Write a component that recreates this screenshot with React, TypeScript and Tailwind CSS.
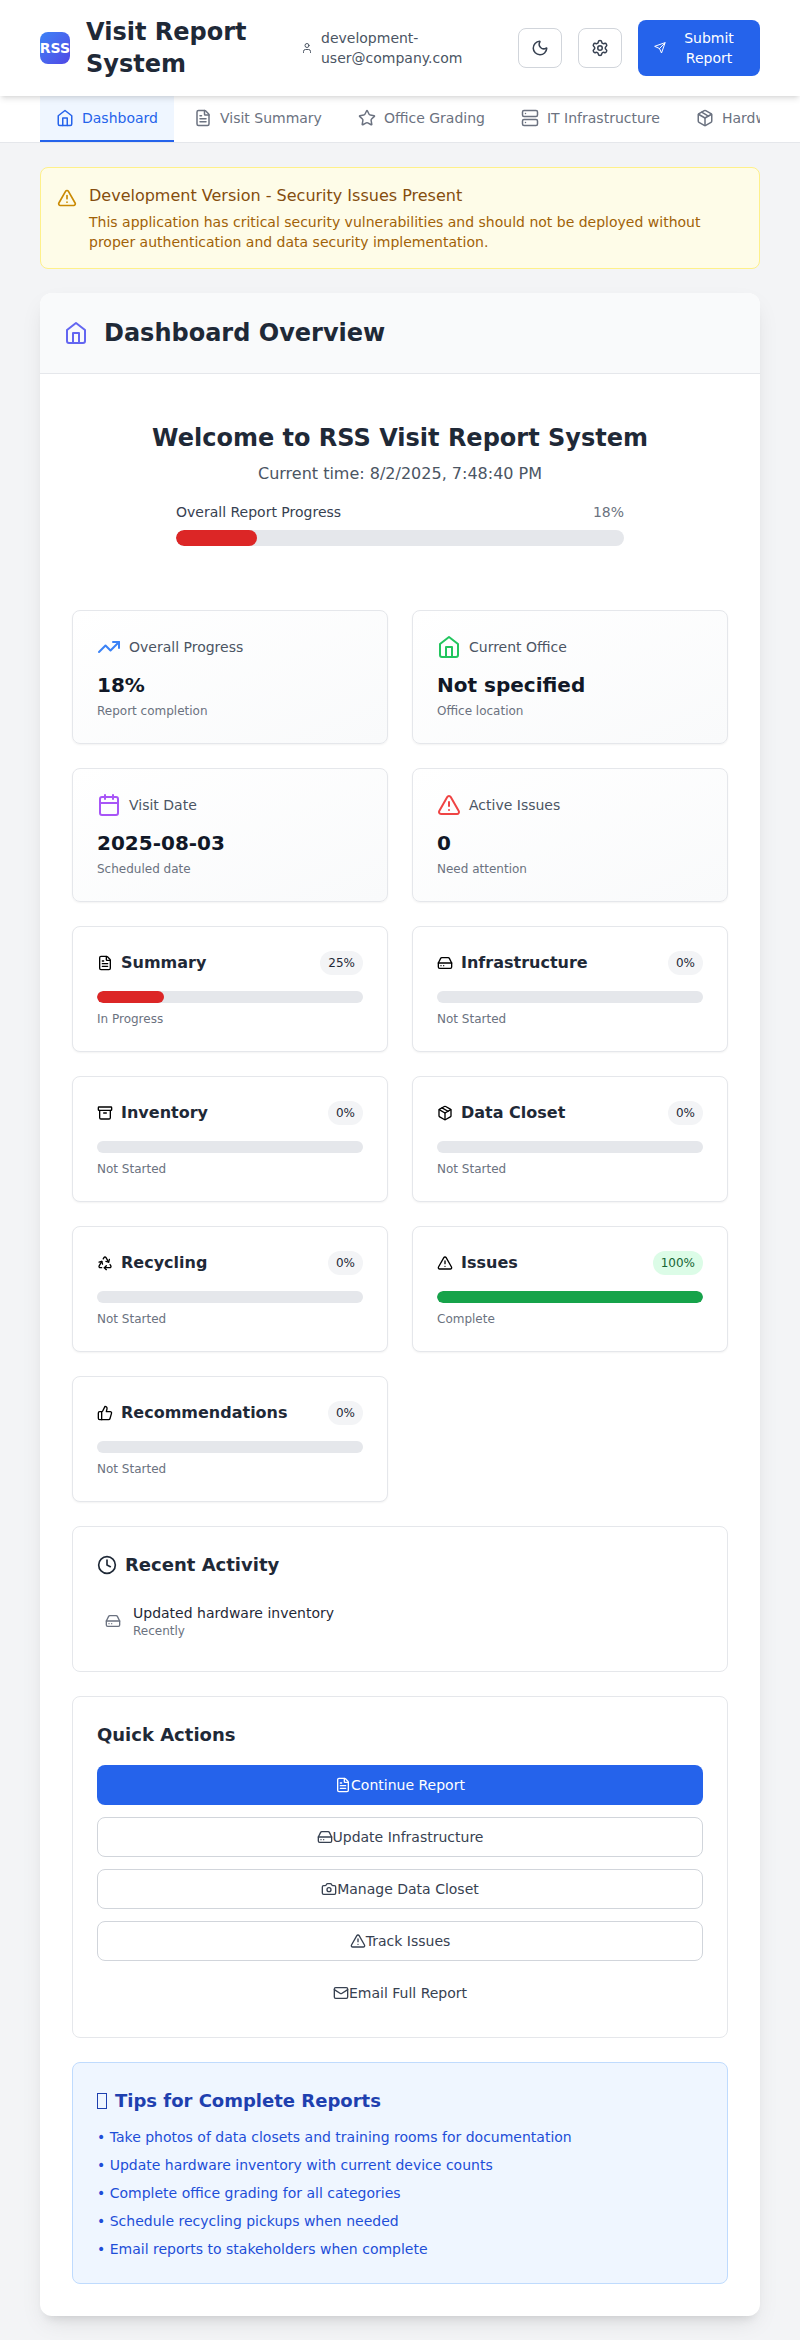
import React from "react";
import {
  AlertTriangle,
  Archive,
  Calendar,
  Camera,
  Clock,
  FileText,
  HardDrive,
  Mail,
  Moon,
  Package,
  Recycle,
  Server,
  Settings,
  Star,
  ThumbsUp,
  TrendingUp,
  User,
} from "lucide-react";
import { FiHome } from "react-icons/fi";

type Icon = React.ComponentType<{ className?: string }>;

function SendIcon({ className }: { className?: string }) {
  return (
    <svg
      viewBox="0 0 24 24"
      fill="none"
      stroke="currentColor"
      strokeWidth="2"
      strokeLinecap="round"
      strokeLinejoin="round"
      className={className}
      aria-hidden="true"
    >
      <path d="m22 2-7 20-4-9-9-4Z" />
      <path d="M22 2 11 13" />
    </svg>
  );
}

const tabs: { label: string; icon: Icon }[] = [
  { label: "Dashboard", icon: FiHome },
  { label: "Visit Summary", icon: FileText },
  { label: "Office Grading", icon: Star },
  { label: "IT Infrastructure", icon: Server },
  { label: "Hardware Inventory", icon: Package },
];

const stats: { label: string; value: string; note: string; icon: Icon; color: string }[] = [
  { label: "Overall Progress", value: "18%", note: "Report completion", icon: TrendingUp, color: "text-[#3b82f6]" },
  { label: "Current Office", value: "Not specified", note: "Office location", icon: FiHome, color: "text-[#22c55e]" },
  { label: "Visit Date", value: "2025-08-03", note: "Scheduled date", icon: Calendar, color: "text-[#a855f7]" },
  { label: "Active Issues", value: "0", note: "Need attention", icon: AlertTriangle, color: "text-[#ef4444]" },
];

const sections: { title: string; percent: number; status: string; icon: Icon }[] = [
  { title: "Summary", percent: 25, status: "In Progress", icon: FileText },
  { title: "Infrastructure", percent: 0, status: "Not Started", icon: HardDrive },
  { title: "Inventory", percent: 0, status: "Not Started", icon: Archive },
  { title: "Data Closet", percent: 0, status: "Not Started", icon: Package },
  { title: "Recycling", percent: 0, status: "Not Started", icon: Recycle },
  { title: "Issues", percent: 100, status: "Complete", icon: AlertTriangle },
  { title: "Recommendations", percent: 0, status: "Not Started", icon: ThumbsUp },
];

const actions: { label: string; icon: Icon; style: string }[] = [
  { label: "Continue Report", icon: FileText, style: "bg-[#2563eb] text-white" },
  { label: "Update Infrastructure", icon: HardDrive, style: "border border-[#d1d5db] bg-white text-[#374151]" },
  { label: "Manage Data Closet", icon: Camera, style: "border border-[#d1d5db] bg-white text-[#374151]" },
  { label: "Track Issues", icon: AlertTriangle, style: "border border-[#d1d5db] bg-white text-[#374151]" },
  { label: "Email Full Report", icon: Mail, style: "text-[#374151]" },
];

const tips = [
  "Take photos of data closets and training rooms for documentation",
  "Update hardware inventory with current device counts",
  "Complete office grading for all categories",
  "Schedule recycling pickups when needed",
  "Email reports to stakeholders when complete",
];

function ProgressBar({ percent, label, size }: { percent: number; label: string; size: string }) {
  return (
    <div
      role="progressbar"
      aria-label={label}
      aria-valuenow={percent}
      aria-valuemin={0}
      aria-valuemax={100}
      className={`w-full overflow-hidden rounded-full bg-[#e5e7eb] ${size}`}
    >
      <div
        className={`h-full rounded-full ${percent === 100 ? "bg-[#16a34a]" : "bg-[#dc2626]"}`}
        style={{ width: `${percent}%` }}
      />
    </div>
  );
}

export default function App() {
  return (
    <div className="min-h-screen bg-[#f3f4f6] font-['DejaVu_Sans',sans-serif] text-[#1f2937]">
      <header className="relative z-10 flex items-center gap-4 bg-white px-10 py-4 shadow-md">
        <div className="flex min-w-0 flex-1 items-center gap-4">
          <div className="flex h-8 w-[30px] shrink-0 items-center justify-center rounded-lg bg-linear-to-br from-[#3b82f6] to-[#4f46e5] text-sm font-bold text-white">
            RSS
          </div>
          <h1 className="text-2xl font-bold">Visit Report System</h1>
        </div>
        <div className="flex shrink-0 items-center gap-4">
          <div className="flex items-center gap-2 text-sm text-[#4b5563]">
            <User className="size-3 shrink-0" />
            <span className="w-[181px]">
              development-
              <wbr />
              user@company.com
            </span>
          </div>
          <button
            aria-label="Toggle dark mode"
            className="flex h-10 w-11 items-center justify-center rounded-lg border border-[#d1d5db] bg-white text-[#374151]"
          >
            <Moon className="size-[18px]" />
          </button>
          <button
            aria-label="Settings"
            className="flex h-10 w-11 items-center justify-center rounded-lg border border-[#d1d5db] bg-white text-[#374151]"
          >
            <Settings className="size-[18px]" />
          </button>
          <button className="flex w-[122px] items-center gap-2 rounded-lg bg-[#2563eb] px-4 py-2 text-sm text-white">
            <SendIcon className="size-3 shrink-0" />
            <span className="flex-1">Submit Report</span>
          </button>
        </div>
      </header>

      <nav className="border-b border-[#e5e7eb] bg-white px-10">
        <div className="flex gap-1 overflow-hidden">
          {tabs.map(({ label, icon: TabIcon }, i) => (
            <button
              key={label}
              className={`flex shrink-0 items-center gap-2 border-b-2 px-4 py-3 text-sm whitespace-nowrap ${
                i === 0
                  ? "border-[#2563eb] bg-[#eff6ff] text-[#2563eb]"
                  : "border-transparent text-[#6b7280]"
              }`}
            >
              <TabIcon className="size-[18px]" />
              {label}
            </button>
          ))}
        </div>
      </nav>

      <main className="flex flex-col gap-6 px-10 py-6">
        <div role="alert" className="flex items-start gap-3 rounded-lg border border-[#fef08a] bg-[#fefce8] p-4">
          <AlertTriangle className="mt-1 size-5 shrink-0 text-[#ca8a04]" />
          <div>
            <h2 className="text-base text-[#854d0e]">Development Version - Security Issues Present</h2>
            <p className="mt-1 text-sm text-[#a16207]">
              This application has critical security vulnerabilities and should not be deployed without proper
              authentication and data security implementation.
            </p>
          </div>
        </div>

        <section className="rounded-xl bg-white shadow-[0_10px_25px_-5px_rgba(0,0,0,0.1),0_8px_10px_-6px_rgba(0,0,0,0.1)]">
          <div className="flex items-center gap-4 rounded-t-xl border-b border-[#e5e7eb] bg-[#f9fafb] p-6">
            <FiHome className="size-6 text-[#6366f1]" />
            <h2 className="text-2xl font-bold">Dashboard Overview</h2>
          </div>

          <div className="flex flex-col gap-6 p-8">
            <div className="pt-4 pb-10 text-center">
              <h3 className="text-2xl font-bold">Welcome to RSS Visit Report System</h3>
              <p className="mt-2 text-base text-[#4b5563]">Current time: 8/2/2025, 7:48:40 PM</p>
              <div className="mx-auto mt-4 max-w-md">
                <div className="mb-2 flex justify-between text-sm">
                  <span className="text-[#374151]">Overall Report Progress</span>
                  <span className="text-[#6b7280]">18%</span>
                </div>
                <ProgressBar percent={18} label="Overall Report Progress" size="h-4" />
              </div>
            </div>

            <div className="grid grid-cols-2 gap-6">
              {stats.map(({ label, value, note, icon: StatIcon, color }) => (
                <div
                  key={label}
                  className="rounded-lg border border-[#e5e7eb] bg-linear-to-br from-white to-[#f9fafb] p-6 shadow-xs"
                >
                  <div className="flex items-center gap-2">
                    <StatIcon className={`size-6 ${color}`} />
                    <span className="text-sm text-[#4b5563]">{label}</span>
                  </div>
                  <p className="mt-3 text-xl font-bold text-[#111827]">{value}</p>
                  <p className="mt-1 text-xs text-[#6b7280]">{note}</p>
                </div>
              ))}
            </div>

            <div className="grid grid-cols-2 gap-6">
              {sections.map(({ title, percent, status, icon: SectionIcon }) => (
                <div key={title} className="rounded-lg border border-[#e5e7eb] bg-white p-6 shadow-xs">
                  <div className="mb-4 flex items-center justify-between">
                    <div className="flex items-center gap-2">
                      <SectionIcon className="size-4 text-black" />
                      <h4 className="text-base font-bold">{title}</h4>
                    </div>
                    <span
                      className={`rounded-full px-2 py-1 text-xs ${
                        percent === 100 ? "bg-[#dcfce7] text-[#166534]" : "bg-[#f3f4f6] text-[#1f2937]"
                      }`}
                    >
                      {percent}%
                    </span>
                  </div>
                  <ProgressBar percent={percent} label={title} size="h-3" />
                  <p className="mt-2 text-xs text-[#6b7280]">{status}</p>
                </div>
              ))}
            </div>

            <div className="rounded-lg border border-[#e5e7eb] bg-white p-6">
              <h3 className="flex items-center gap-2 text-lg font-bold">
                <Clock className="size-5" />
                Recent Activity
              </h3>
              <div className="mt-4 flex items-center gap-3 p-2">
                <HardDrive className="size-4 text-[#6b7280]" />
                <div>
                  <p className="text-sm">Updated hardware inventory</p>
                  <p className="text-xs text-[#6b7280]">Recently</p>
                </div>
              </div>
            </div>

            <div className="rounded-lg border border-[#e5e7eb] bg-white p-6">
              <h3 className="text-lg font-bold">Quick Actions</h3>
              <div className="mt-4 flex flex-col gap-3">
                {actions.map(({ label, icon: ActionIcon, style }) => (
                  <button
                    key={label}
                    className={`flex h-10 items-center justify-center rounded-lg text-sm ${style}`}
                  >
                    <ActionIcon className="size-4" />
                    {label}
                  </button>
                ))}
              </div>
            </div>

            <div className="rounded-lg border border-[#bfdbfe] bg-[#eff6ff] p-6">
              <h3 className="flex items-center gap-2 text-lg font-bold text-[#1e40af]">
                <span aria-hidden="true" className="h-4 w-[10px] border border-[#1e40af]" />
                Tips for Complete Reports
              </h3>
              <ul className="mt-3 flex flex-col gap-2 text-sm text-[#1d4ed8]">
                {tips.map((tip) => (
                  <li key={tip}>• {tip}</li>
                ))}
              </ul>
            </div>
          </div>
        </section>
      </main>
    </div>
  );
}
